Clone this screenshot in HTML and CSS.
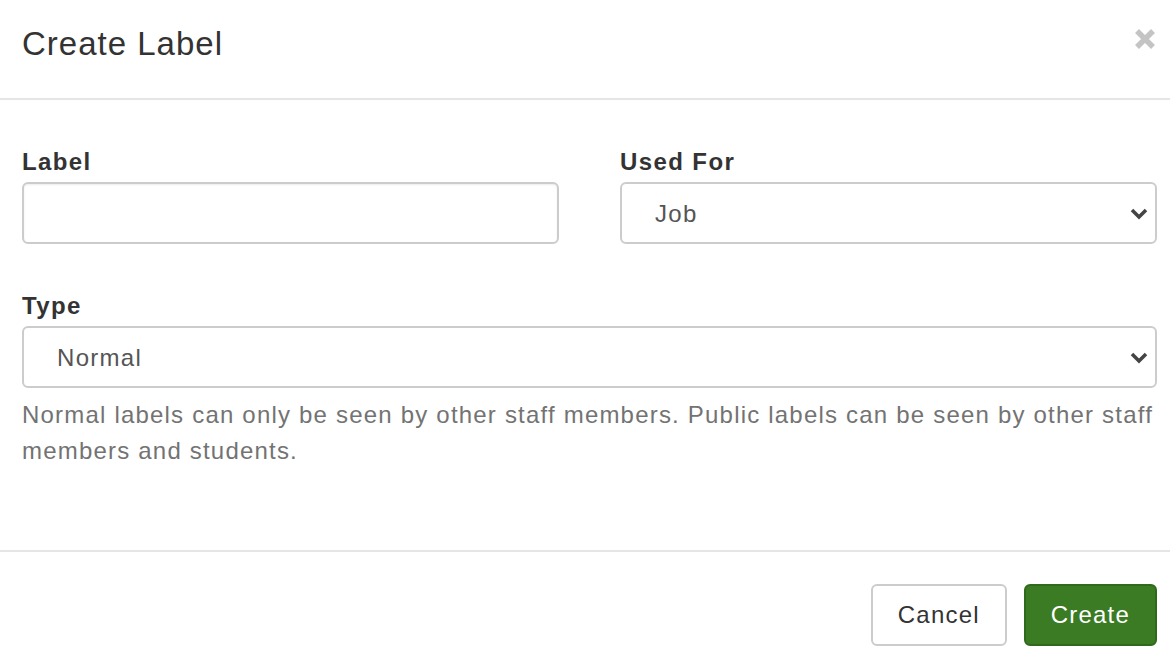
FILE: index.html
```html
<!DOCTYPE html>
<html lang="en">
<head>
    <meta charset="UTF-8">
    <title>Create Label</title>
    <link rel="stylesheet" href="styles.css">
</head>
<body>
    <div class="modal">
        <div class="modal-header">
            <h4 class="modal-title">Create Label</h4>
            <button class="close" type="button" aria-label="Close">
                <svg width="22" height="22" viewBox="0 0 22 22">
                    <path d="M3 3 L19 19 M19 3 L3 19" stroke="#c4c4c4" stroke-width="5.5" stroke-linecap="butt"/>
                </svg>
            </button>
        </div>
        <form class="modal-body">
            <div class="row">
                <div class="form-group">
                    <label for="label">Label</label>
                    <input type="text" id="label" class="form-control">
                </div>
                <div class="form-group">
                    <label for="used-for">Used For</label>
                    <div class="select-wrap">
                        <select id="used-for" class="form-control">
                            <option>Job</option>
                        </select>
                        <svg class="caret" width="18" height="12" viewBox="0 0 18 12">
                            <path d="M2 2 L9 9 L16 2" fill="none" stroke="#444" stroke-width="3.5"/>
                        </svg>
                    </div>
                </div>
            </div>
            <div class="form-group">
                <label for="type">Type</label>
                <div class="select-wrap">
                    <select id="type" class="form-control">
                        <option>Normal</option>
                    </select>
                    <svg class="caret" width="18" height="12" viewBox="0 0 18 12">
                        <path d="M2 2 L9 9 L16 2" fill="none" stroke="#444" stroke-width="3.5"/>
                    </svg>
                </div>
                <p class="help-block">Normal labels can only be seen by other staff members. Public labels can be seen by other staff members and students.</p>
            </div>
        </form>
        <div class="modal-footer">
            <button type="button" class="btn btn-default">Cancel</button>
            <button type="button" class="btn btn-success">Create</button>
        </div>
    </div>
</body>
</html>
```

FILE: styles.css
```css
body {
    margin: 0;
    background-color: white;
    color: #333;
    font-family: "Liberation Sans", Arial, sans-serif;
    font-size: 24px;
    line-height: 36px;
    letter-spacing: 1px;
}

.modal {
    width: 1170px;
    height: 670px;
    overflow: hidden;
}

.modal-header {
    display: flex;
    align-items: flex-start;
    justify-content: space-between;
    padding: 22px 14px 32px 22px;
    border-bottom: 2px solid #e5e5e5;
}

.modal-title {
    margin: 0;
    font-size: 33px;
    font-weight: normal;
    line-height: 44px;
    letter-spacing: 1px;
}

.close {
    border: none;
    background: none;
    padding: 0;
    margin-top: 6px;
    cursor: pointer;
}

.modal-body {
    margin: 0;
    padding: 44px 13px 81px 22px;
}

.row {
    display: grid;
    grid-template-columns: 1fr 1fr;
    gap: 61px;
}

.form-group {
    margin-bottom: 44px;
}

.form-group:last-child {
    margin-bottom: 0;
}

label {
    display: block;
    font-weight: bold;
    letter-spacing: 1.4px;
    margin-bottom: 2px;
}

.form-control {
    display: block;
    box-sizing: border-box;
    width: 100%;
    height: 62px;
    padding: 0 32px;
    border: 2px solid #ccc;
    border-radius: 6px;
    background-color: white;
    box-shadow: inset 0 1px 2px rgba(0, 0, 0, 0.08);
    font-family: inherit;
    font-size: 24px;
    letter-spacing: 1.3px;
    color: #555;
}

select.form-control {
    appearance: none;
    -webkit-appearance: none;
    padding-left: 33px;
    box-shadow: none;
}

.select-wrap {
    position: relative;
}

.caret {
    position: absolute;
    right: 9px;
    top: 26px;
    pointer-events: none;
}

.help-block {
    margin: 9px 0 0;
    color: #737373;
    letter-spacing: 1.2px;
}

.modal-footer {
    display: flex;
    justify-content: flex-end;
    gap: 17px;
    padding: 32px 13px 25px;
    border-top: 2px solid #e5e5e5;
}

.btn {
    height: 62px;
    padding: 0 25px;
    border: 2px solid #ccc;
    border-radius: 6px;
    font-family: inherit;
    font-size: 24px;
    letter-spacing: 1.2px;
    cursor: pointer;
}

.btn-default {
    background-color: white;
    color: #333;
}

.btn-success {
    background-color: #3a7b24;
    border-color: #2f6a1c;
    color: white;
}
```
